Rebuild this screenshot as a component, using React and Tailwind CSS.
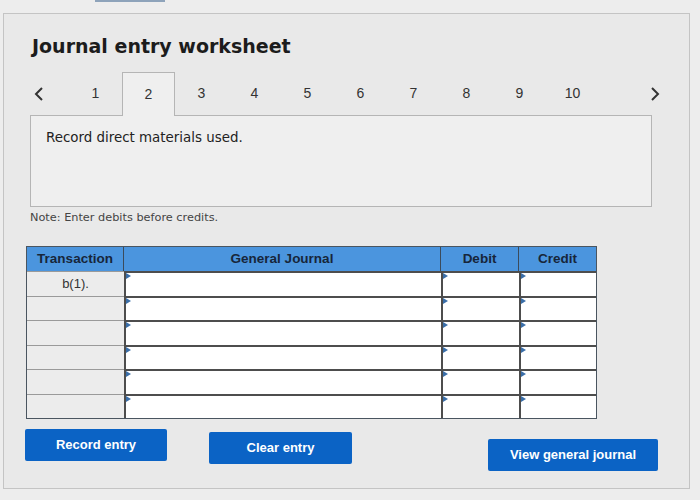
import React from "react";

const verdana = { fontFamily: '"DejaVu Sans", Verdana, sans-serif' };
const arial = { fontFamily: '"Liberation Sans", Arial, sans-serif' };

function Marker() {
  return (
    <span className="absolute left-0 top-0 h-0 w-0 border-y-[3px] border-y-transparent border-l-[5px] border-l-[#3a6ea8]" />
  );
}

export default function App() {
  const tabs = [1, 2, 3, 4, 5, 6, 7, 8, 9, 10];
  const rows = ["b(1).", "", "", "", "", ""];
  return (
    <div className="w-[700px] h-[500px] bg-[#ededed] overflow-hidden" style={arial}>
      <div className="h-[2px] w-[70px] ml-[95px] bg-[#8ea3ba]" />
      <div className="ml-[3px] mt-[11px] w-[687px] h-[476px] border border-[#c4c4c4] bg-[#e9e9e9] pl-[22px]">
        <h1 className="ml-[6px] mt-[20px] text-[19px] leading-[24px] font-bold text-[#1c1c1c]" style={verdana}>
          Journal entry worksheet
        </h1>

        <div className="mt-[14px] flex items-end h-[43px]">
          <div className="w-[43px] h-[43px] flex items-center pl-[7px] text-[#333]">
            <svg width="12" height="16" viewBox="0 0 12 16">
              <path d="M9 2 L3 8 L9 14" fill="none" stroke="#333" strokeWidth="2" />
            </svg>
          </div>
          {tabs.map((t) => (
            <div
              key={t}
              className={
                "w-[53px] flex items-center justify-center text-[14px] text-[#333] " +
                (t === 2
                  ? "relative z-10 border border-b-0 border-[#b5b5b5] bg-[#efefef] -mb-px h-[44px] pb-px"
                  : "h-[43px]")
              }
            >
              {t}
            </div>
          ))}
          <div className="ml-[50px] h-[43px] flex items-center">
            <svg width="12" height="16" viewBox="0 0 12 16">
              <path d="M3 2 L9 8 L3 14" fill="none" stroke="#333" strokeWidth="2" />
            </svg>
          </div>
        </div>

        <div className="ml-[4px] w-[622px] h-[92px] border border-[#b5b5b5] bg-[#efefef] pl-[15px] pt-[14px]">
          <p className="text-[13.4px] leading-[16px] text-[#222]" style={verdana}>
            Record direct materials used.
          </p>
        </div>

        <p className="ml-[4px] mt-[3px] text-[11.3px] leading-[16px] text-[#444]" style={verdana}>
          Note: Enter debits before credits.
        </p>

        <div className="mt-[20px] w-[571px] border border-[#4a5560]">
          <div className="grid grid-cols-[97px_317px_78px_77px] h-[24px] bg-[#4b95de] text-[13.5px] font-bold text-[#17263a]">
            <div className="flex items-center justify-center border-r border-[#3b4b5b]">Transaction</div>
            <div className="flex items-center justify-center border-r border-[#3b4b5b]">General Journal</div>
            <div className="flex items-center justify-center border-r border-[#3b4b5b]">Debit</div>
            <div className="flex items-center justify-center">Credit</div>
          </div>
          {rows.map((r, i) => (
            <div key={i} className="grid grid-cols-[97px_317px_78px_77px] h-[24.5px]">
              <div className="flex items-center justify-center bg-[#ececec] border-t border-[#9a9a9a] text-[13px] text-[#333]">
                {r}
              </div>
              <div className="relative bg-white border-t-2 border-l-2 border-[#4d4d4d]">
                <Marker />
              </div>
              <div className="relative bg-white border-t-2 border-l-2 border-[#4d4d4d]">
                <Marker />
              </div>
              <div className="relative bg-white border-t-2 border-l-2 border-[#4d4d4d]">
                <Marker />
              </div>
            </div>
          ))}
        </div>

        <div className="flex items-start">
          <button className="-ml-px mt-[10px] w-[142px] h-[32px] bg-[#0b63c5] text-white text-[13px] font-bold rounded-[2px]">
            Record entry
          </button>
          <button className="ml-[42px] mt-[13px] w-[143px] h-[32px] bg-[#0b63c5] text-white text-[13px] font-bold rounded-[2px]">
            Clear entry
          </button>
          <button className="ml-[136px] mt-[20px] w-[170px] h-[32px] bg-[#0b63c5] text-white text-[13px] font-bold rounded-[2px]">
            View general journal
          </button>
        </div>
      </div>
    </div>
  );
}
